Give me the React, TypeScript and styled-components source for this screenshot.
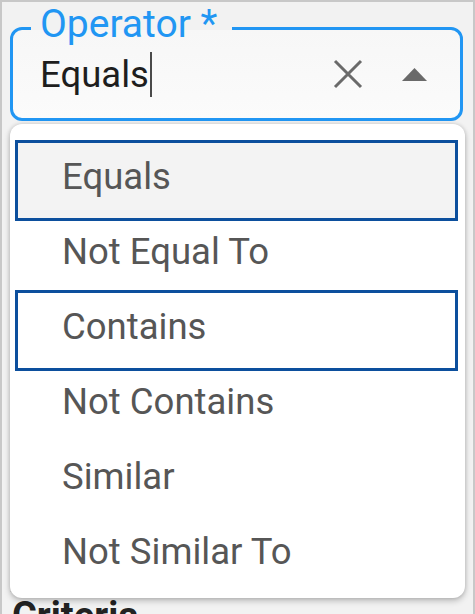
import React from 'react';
import styled, { createGlobalStyle } from 'styled-components';

const Global = createGlobalStyle`
  html, body { margin: 0; padding: 0; background: #ffffff; }
  body { font-family: Roboto, "Liberation Sans", sans-serif; }
  * { box-sizing: border-box; }
`;

const Frame = styled.div`
  position: relative;
  width: 475px;
  height: 614px;
  overflow: hidden;
  border: 2px solid #c8c8c8;
  border-bottom: none;
  background: #f2f2f2;
  padding: 25px 10px 0 8px;
  display: flex;
  flex-direction: column;
`;

const Field = styled.fieldset`
  margin: 0;
  min-width: 0;
  border: 3px solid #2196f3;
  border-radius: 12px;
  padding: 0 0 0 18px;
  background: linear-gradient(#f7f7f7, #fbfbfb);
`;

const Legend = styled.legend`
  font-size: 39px;
  line-height: 3px;
  color: #2196f3;
  padding: 0 15px 0 9px;
  transform: translateY(-4px);
`;

const ValueRow = styled.div`
  display: flex;
  align-items: center;
  height: 88px;
  padding: 0 33px 0 9px;
`;

const Value = styled.span`
  font-size: 36.5px;
  color: #1e1e1e;
`;

const Caret = styled.span`
  width: 2px;
  height: 45px;
  margin-left: 1px;
  background: #4a4a4a;
`;

const Icons = styled.div`
  margin-left: auto;
  display: flex;
  align-items: center;
  gap: 39px;
`;

const Rows = styled.div`
  margin-top: 191px;
  display: flex;
  flex-direction: column;
`;

const Row = styled.div`
  height: 35px;
  border-bottom: 1px solid #dedede;
`;

const Heading = styled.h2`
  margin: 4px 0 0 2px;
  font-size: 38px;
  font-weight: 700;
  color: #222;
  line-height: 40px;
`;

const Popup = styled.ul`
  position: absolute;
  top: 122px;
  left: 8px;
  width: 455px;
  height: 474px;
  margin: 0;
  padding: 19px 0 0 0;
  list-style: none;
  background: #ffffff;
  border-radius: 12px;
  box-shadow: 0 3px 6px rgba(0, 0, 0, 0.22), 0 0 4px rgba(0, 0, 0, 0.14);
`;

const Option = styled.li<{ $focused?: boolean; $selected?: boolean }>`
  display: flex;
  align-items: center;
  height: 75px;
  margin: 0 10px 0 8px;
  padding: 0 0 9px 44px;
  font-size: 36.5px;
  color: #565656;
  background: ${(p) => (p.$selected ? '#f3f3f3' : 'transparent')};
  outline: ${(p) => (p.$focused ? '3px solid #0c4f9d' : 'none')};
`;

const options = [
  { label: 'Equals', focused: true, selected: true },
  { label: 'Not Equal To' },
  { label: 'Contains', focused: true },
  { label: 'Not Contains' },
  { label: 'Similar' },
  { label: 'Not Similar To' },
];

function ClearIcon() {
  return (
    <svg width="30" height="30" viewBox="0 0 30 30">
      <path d="M2 2 L28 28 M28 2 L2 28" stroke="#6a6a6a" strokeWidth="3" fill="none" />
    </svg>
  );
}

function ArrowUp() {
  return (
    <svg width="25" height="13" viewBox="0 0 25 13">
      <polygon points="0,13 12.5,0 25,13" fill="#6a6a6a" />
    </svg>
  );
}

export default function App() {
  return (
    <>
      <Global />
      <Frame>
        <Field>
          <Legend>Operator *</Legend>
          <ValueRow>
            <Value>Equals</Value>
            <Caret />
            <Icons>
              <ClearIcon />
              <ArrowUp />
            </Icons>
          </ValueRow>
        </Field>
        <Rows>
          {Array.from({ length: 8 }).map((_, i) => (
            <Row key={i} />
          ))}
        </Rows>
        <Heading>Criteria</Heading>
        <Popup>
          {options.map((o) => (
            <Option key={o.label} $focused={o.focused} $selected={o.selected}>
              {o.label}
            </Option>
          ))}
        </Popup>
      </Frame>
    </>
  );
}
